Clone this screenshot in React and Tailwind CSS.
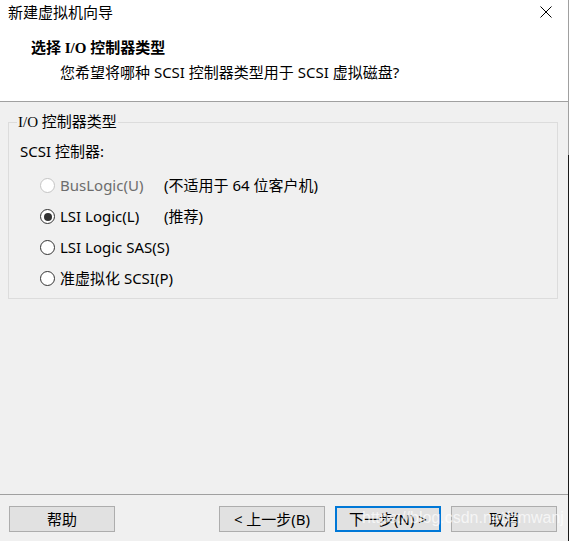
import React from 'react';

function Radio({ checked, disabled, label, note }) {
    return (
        <div className="flex items-center h-[31px] whitespace-nowrap">
            <span className={`w-[15px] h-[15px] rounded-full border flex items-center justify-center bg-white shrink-0 ${disabled ? 'border-[#c4c4c4]' : 'border-[#333333]'}`}>
                {checked && <span className="w-[8px] h-[8px] rounded-full bg-[#333333]" />}
            </span>
            <span className={`ml-[5px] min-w-[104px] ${disabled ? 'text-[#6d6d6d]' : 'text-black'}`}>{label}</span>
            {note && <span>{note}</span>}
        </div>
    );
}

function Button({ children, primary }) {
    return (
        <button className={`w-[106px] h-[26px] shrink-0 bg-[#e1e1e1] text-black text-[15px] flex items-center justify-center whitespace-nowrap ${primary ? 'border-2 border-[#0078d7]' : 'border border-[#adadad]'}`}>
            {children}
        </button>
    );
}

export default function App() {
    return (
        <div className="w-[569px] h-[541px] flex overflow-hidden text-[15px] text-black font-['Segoe_UI','Noto_Sans','Noto_Sans_CJK_SC',sans-serif] leading-none">
            <div className="w-[568px] h-full bg-[#f0f0f0] flex flex-col relative">
                {/* ヘッダー */}
                <div className="bg-white h-[102px] border-b border-[#a0a0a0] flex flex-col">
                    <div className="h-[25px] flex items-center justify-between pl-[8px] pr-[16px]">
                        <span>新建虚拟机向导</span>
                        <svg width="12" height="12" viewBox="0 0 12 12" className="mb-[1px]">
                            <path d="M0.5 0.5 L11.5 11.5 M11.5 0.5 L0.5 11.5" stroke="#000" strokeWidth="1" />
                        </svg>
                    </div>
                    <div className="pl-[31px] mt-[16px] font-bold text-[15px] font-['Liberation_Serif','Noto_Sans_CJK_SC',serif]">选择 I/O 控制器类型</div>
                    <div className="pl-[60px] mt-[9px]">您希望将哪种 SCSI 控制器类型用于 SCSI 虚拟磁盘?</div>
                </div>

                {/* 本体 */}
                <div className="px-[8px] pt-[13px]">
                    <fieldset className="border border-[#dcdcdc] w-[550px] h-[184px] pl-[11px] pb-0">
                        <legend className="px-[1px] ml-[-3px] mt-[1px] font-['Liberation_Serif','Noto_Sans_CJK_SC',serif] text-[15px]">I/O 控制器类型</legend>
                        <div className="mt-[14px]">SCSI 控制器:</div>
                        <div className="pl-[20px] mt-[11px]">
                            <Radio disabled label="BusLogic(U)" note="(不适用于 64 位客户机)" />
                            <Radio checked label="LSI Logic(L)" note="(推荐)" />
                            <Radio label="LSI Logic SAS(S)" />
                            <Radio label="准虚拟化 SCSI(P)" />
                        </div>
                    </fieldset>
                </div>

                <div className="flex-1" />

                {/* フッター */}
                <div className="border-t border-[#a0a0a0] h-[47px] flex items-start pt-[11px] pl-[9px]">
                    <Button>帮助</Button>
                    <div className="ml-[104px] flex gap-[10px]">
                        <Button>&lt; 上一步(B)</Button>
                        <Button primary>下一步(N) &gt;</Button>
                        <Button>取消</Button>
                    </div>
                </div>

                <div className="absolute left-[362px] top-[510px] text-[16px] whitespace-nowrap text-white/70 font-['Liberation_Sans',sans-serif] pointer-events-none">https://blog.csdn.net/zmwanj</div>
            </div>
            <div className="w-[1px] h-full flex flex-col">
                <div className="h-[155px] bg-[#a0a0a0]" />
                <div className="flex-1 bg-[#1a1a1a]" />
            </div>
        </div>
    );
}
